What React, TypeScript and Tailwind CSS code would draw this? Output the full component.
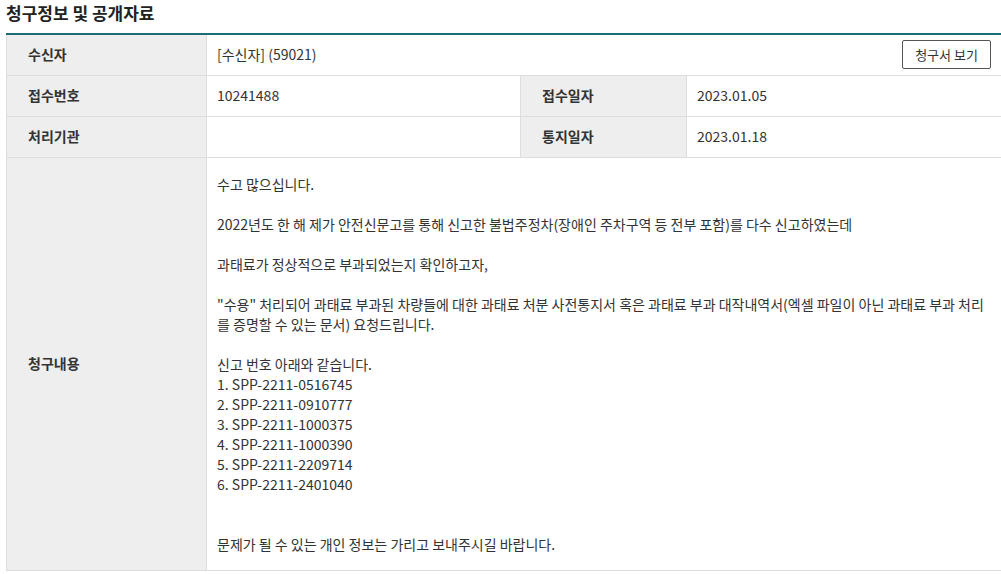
import React from 'react';

const font = { fontFamily: '"Noto Sans CJK KR", "Noto Sans", sans-serif' };

const reportNumbers = [
    'SPP-2211-0516745',
    'SPP-2211-0910777',
    'SPP-2211-1000375',
    'SPP-2211-1000390',
    'SPP-2211-2209714',
    'SPP-2211-2401040',
];

const Label: React.FC<{ children: React.ReactNode; className?: string }> = ({ children, className = '' }) => (
    <th className={`bg-[#eeeeee] border border-[#dddddd] text-left font-semibold text-[#333] text-[14px] pl-[21px] pr-2 align-middle ${className}`}>
        {children}
    </th>
);

export default function App() {
    return (
        <div className="w-[1001px] h-[574px] overflow-hidden bg-white text-[#333]" style={font}>
            <h2 className="text-[17px] font-bold text-[#222] leading-[24px] pl-[6px] pt-[1px] h-[33px]">청구정보 및 공개자료</h2>

            <div className="pl-[6px]">
                <table className="w-[996px] border-collapse border-t-2 border-t-[#1b6c78] table-fixed">
                    <colgroup>
                        <col className="w-[200px]" />
                        <col className="w-[314px]" />
                        <col className="w-[166px]" />
                        <col />
                    </colgroup>
                    <tbody className="text-[14px]">
                        <tr className="h-[41px]">
                            <Label>수신자</Label>
                            <td colSpan={3} className="border border-[#dddddd] pl-[10px] pr-[10px]">
                                <div className="flex items-center justify-between">
                                    <span>[수신자] (59021)</span>
                                    <button className="h-[29px] w-[89px] border border-[#555] rounded-[2px] bg-white text-[13px] text-[#333]">
                                        청구서 보기
                                    </button>
                                </div>
                            </td>
                        </tr>
                        <tr className="h-[41px]">
                            <Label>접수번호</Label>
                            <td className="border border-[#dddddd] pl-[10px]">10241488</td>
                            <Label className="pl-[20px]">접수일자</Label>
                            <td className="border border-[#dddddd] pl-[10px]">2023.01.05</td>
                        </tr>
                        <tr className="h-[41px]">
                            <Label>처리기관</Label>
                            <td className="border border-[#dddddd] pl-[10px]"></td>
                            <Label className="pl-[20px]">통지일자</Label>
                            <td className="border border-[#dddddd] pl-[10px]">2023.01.18</td>
                        </tr>
                        <tr>
                            <Label>청구내용</Label>
                            <td colSpan={3} className="border border-[#dddddd] pl-[10px] pr-[14px] pt-[16px] pb-[16px] leading-[20px] align-top">
                                <p>수고 많으십니다.</p>
                                <p className="mt-[20px]">2022년도 한 해 제가 안전신문고를 통해 신고한 불법주정차(장애인 주차구역 등 전부 포함)를 다수 신고하였는데</p>
                                <p className="mt-[20px]">과태료가 정상적으로 부과되었는지 확인하고자,</p>
                                <p className="mt-[20px]">"수용" 처리되어 과태료 부과된 차량들에 대한 과태료 처분 사전통지서 혹은 과태료 부과 대작내역서(엑셀 파일이 아닌 과태료 부과 처리를 증명할 수 있는 문서) 요청드립니다.</p>
                                <p className="mt-[20px]">신고 번호 아래와 같습니다.</p>
                                {reportNumbers.map((n, i) => (
                                    <p key={n}>{i + 1}. {n}</p>
                                ))}
                                <p className="mt-[40px]">문제가 될 수 있는 개인 정보는 가리고 보내주시길 바랍니다.</p>
                            </td>
                        </tr>
                    </tbody>
                </table>
            </div>
        </div>
    );
}
